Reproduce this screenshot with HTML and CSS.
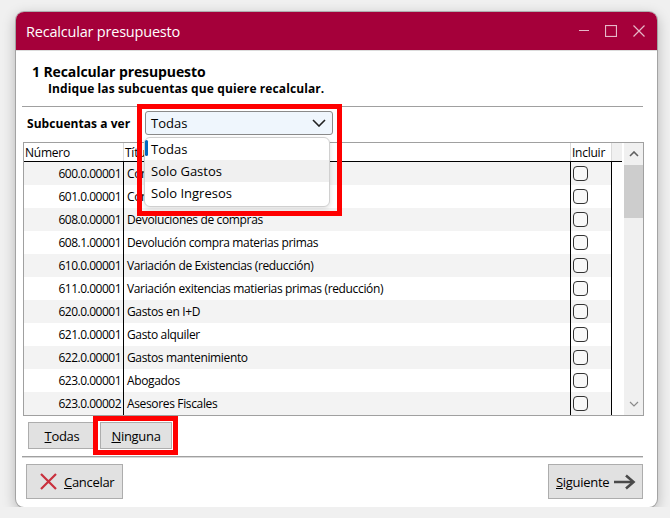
FILE: index.html
```html
<!DOCTYPE html>
<html>
<head>
  <meta charset="utf-8"/>
  <title>Recalcular presupuesto</title>
  <link rel="stylesheet" href="styles.css">
</head>
<body>

<div class="window">
  <div class="titlebar">
    <span class="title">Recalcular presupuesto</span>
    <div class="win-btns">
      <svg class="wb-min" width="12" height="12" viewBox="0 0 12 12"><path d="M0 5.5 H10" /></svg>
      <svg class="wb-max" width="12" height="12" viewBox="0 0 12 12"><rect x="0.5" y="0.5" width="11" height="11" /></svg>
      <svg class="wb-close" width="12" height="12" viewBox="0 0 12 12"><path d="M0.5 0.5 L11.5 11.5 M11.5 0.5 L0.5 11.5" /></svg>
    </div>
  </div>

  <div class="content">
    <div class="step">
      <h1>1 Recalcular presupuesto</h1>
      <p>Indique las subcuentas que quiere recalcular.</p>
    </div>

    <div class="rule"></div>

    <div class="filter">
      <label>Subcuentas a ver</label>
      <div class="combo-wrap">
        <div class="combo">
          <span>Todas</span>
          <svg width="14" height="8" viewBox="0 0 14 8"><path d="M1 1 L7 7 L13 1" /></svg>
        </div>
        <ul class="dropdown">
          <li class="current">Todas</li>
          <li class="hover">Solo Gastos</li>
          <li>Solo Ingresos</li>
        </ul>
        <div class="mark mark-combo"></div>
      </div>
    </div>

    <div class="grid">
      <div class="grid-main">
        <div class="grid-head">
          <div class="c-num">Número</div>
          <div class="c-tit">Título</div>
          <div class="c-inc">Incluir</div>
          <div class="c-fill"></div>
        </div>
        <div class="grid-body">
          <div class="row"><div class="c-num">600.0.00001</div><div class="c-tit">Compras de mercaderías</div><div class="c-inc"><span class="check"></span></div><div class="c-fill"></div></div>
          <div class="row"><div class="c-num">601.0.00001</div><div class="c-tit">Compras de materias primas</div><div class="c-inc"><span class="check"></span></div><div class="c-fill"></div></div>
          <div class="row"><div class="c-num">608.0.00001</div><div class="c-tit">Devoluciones de compras</div><div class="c-inc"><span class="check"></span></div><div class="c-fill"></div></div>
          <div class="row"><div class="c-num">608.1.00001</div><div class="c-tit">Devolución compra materias primas</div><div class="c-inc"><span class="check"></span></div><div class="c-fill"></div></div>
          <div class="row"><div class="c-num">610.0.00001</div><div class="c-tit">Variación de Existencias (reducción)</div><div class="c-inc"><span class="check"></span></div><div class="c-fill"></div></div>
          <div class="row"><div class="c-num">611.0.00001</div><div class="c-tit">Variación exitencias matierias primas (reducción)</div><div class="c-inc"><span class="check"></span></div><div class="c-fill"></div></div>
          <div class="row"><div class="c-num">620.0.00001</div><div class="c-tit">Gastos en I+D</div><div class="c-inc"><span class="check"></span></div><div class="c-fill"></div></div>
          <div class="row"><div class="c-num">621.0.00001</div><div class="c-tit">Gasto alquiler</div><div class="c-inc"><span class="check"></span></div><div class="c-fill"></div></div>
          <div class="row"><div class="c-num">622.0.00001</div><div class="c-tit">Gastos mantenimiento</div><div class="c-inc"><span class="check"></span></div><div class="c-fill"></div></div>
          <div class="row"><div class="c-num">623.0.00001</div><div class="c-tit">Abogados</div><div class="c-inc"><span class="check"></span></div><div class="c-fill"></div></div>
          <div class="row"><div class="c-num">623.0.00002</div><div class="c-tit">Asesores Fiscales</div><div class="c-inc"><span class="check"></span></div><div class="c-fill"></div></div>
        </div>
      </div>
      <div class="vscroll">
        <div class="sb-arrow">
          <svg width="10" height="6" viewBox="0 0 10 6"><path d="M1 5 L5 1 L9 5" /></svg>
        </div>
        <div class="sb-thumb"></div>
        <div class="sb-track"></div>
        <div class="sb-arrow sb-down">
          <svg width="10" height="6" viewBox="0 0 10 6"><path d="M1 1 L5 5 L9 1" /></svg>
        </div>
      </div>
    </div>

    <div class="sel-btns">
      <button class="btn btn-todas"><u>T</u>odas</button>
      <div class="mark-wrap">
        <button class="btn btn-ninguna"><u>N</u>inguna</button>
        <div class="mark mark-ninguna"></div>
      </div>
    </div>

    <div class="sep"></div>

    <div class="footer">
      <button class="btn btn-big btn-cancel">
        <svg width="17" height="17" viewBox="0 0 17 17"><path d="M1 1 L16 16 M16 1 L1 16" /></svg>
        <span><u>C</u>ancelar</span>
      </button>
      <button class="btn btn-big btn-next">
        <span><u>S</u>iguiente</span>
        <svg width="23" height="16" viewBox="0 0 23 16"><path class="shaft" d="M1 8 H20" /><path d="M13 1.5 L20.5 8 L13 14.5" /></svg>
      </button>
    </div>
  </div>
</div>

</body>
</html>
```

FILE: styles.css
```css
body {
    margin: 0px;
    padding: 0px;
    background-color: #f0f0f0;
    font-family: "Open Sans", "Noto Sans", sans-serif;
    color: #000;
}

.window {
    width: 641px;
    height: 495px;
    margin: 12px 0px 0px 16px;
    background-color: #fff;
    border-radius: 8px;
    overflow: hidden;
    box-shadow: 0 0 0 1px rgba(0,0,0,0.22), 0 4px 14px rgba(0,0,0,0.28);
    display: flex;
    flex-direction: column;
}

/* title bar */
.titlebar {
    height: 38px;
    flex: none;
    background-color: #a5003a;
    border-bottom: 1px solid #dcdcdc;
    display: flex;
    align-items: center;
    justify-content: space-between;
    padding-left: 10px;
}
.title {
    color: #fff;
    font-size: 14.5px;
    letter-spacing: -0.2px;
}
.win-btns {
    display: flex;
    align-items: center;
    margin-right: 12px;
    margin-top: -1px;
}
.win-btns svg {
    fill: none;
    stroke: rgba(255,255,255,0.72);
    stroke-width: 1.2;
}
.wb-max { margin-left: 14px; }
.wb-close { margin-left: 16px; }

/* content */
.content {
    flex: 1;
    display: flex;
    flex-direction: column;
}
.step {
    margin-top: 12px;
}
.step h1 {
    margin: 0px 0px 0px 16px;
    font-size: 14px;
    line-height: 18px;
    font-weight: bold;
    letter-spacing: -0.1px;
}
.step p {
    margin: 0px 0px 0px 32px;
    font-size: 12px;
    line-height: 16px;
    font-weight: bold;
    letter-spacing: 0.1px;
}
.rule {
    height: 1px;
    margin: 9px 14px 0px 6px;
    background-color: #a0a0a0;
}

/* filter */
.filter {
    margin-top: 4px;
    display: flex;
    align-items: center;
    padding-left: 11px;
}
.filter label {
    width: 118px;
    font-size: 12px;
    font-weight: bold;
    letter-spacing: 0.05px;
}
.combo-wrap {
    position: relative;
    z-index: 2;
}
.combo {
    width: 188px;
    height: 24px;
    box-sizing: border-box;
    border: 1px solid #8a8a8a;
    border-radius: 3px;
    background-color: #eff6fd;
    display: flex;
    align-items: center;
    justify-content: space-between;
    padding: 0px 6px 0px 5px;
    font-size: 13px;
}
.combo svg {
    fill: none;
    stroke: #222;
    stroke-width: 1.6;
}
.dropdown {
    position: absolute;
    left: -1px;
    top: 26px;
    width: 186px;
    height: 70px;
    box-sizing: border-box;
    margin: 0px;
    padding: 0px;
    list-style: none;
    background-color: #fff;
    border: 1px solid #d0d0d0;
    border-radius: 6px;
    box-shadow: 0 2px 5px rgba(0,0,0,0.12);
    font-size: 13px;
}
.dropdown li {
    height: 22px;
    line-height: 22px;
    padding-left: 6px;
    position: relative;
}
.dropdown li.hover {
    background-color: #f0f0f0;
}
.dropdown li.current::before {
    content: "";
    position: absolute;
    left: 0px;
    top: 2px;
    width: 3px;
    height: 16px;
    border-radius: 2px;
    background-color: #0067c0;
}

.mark {
    position: absolute;
    box-sizing: border-box;
    border: 5px solid #f00;
}
.mark-combo {
    left: -8px;
    top: -7px;
    width: 205px;
    height: 112px;
}

/* grid */
.grid {
    margin: 7px 0px 0px 7px;
    width: 621px;
    height: 274px;
    box-sizing: border-box;
    border: 1px solid #a0a0a0;
    display: flex;
    overflow: hidden;
    font-size: 12px;
    letter-spacing: -0.25px;
}
.grid-main {
    width: 598px;
    flex: none;
}
.grid-head {
    display: flex;
    height: 18px;
    border-bottom: 1px solid #000;
    line-height: 20px;
}
.grid-head > div {
    box-sizing: border-box;
    border-right: 1px solid #dadada;
    padding-left: 1px;
    white-space: nowrap;
    overflow: hidden;
}
.grid-head .c-fill {
    background-color: #f0f0f0;
    border-right: 0px;
}
.c-num { width: 100px; }
.c-tit { width: 447px; }
.c-inc { width: 41px; }
.c-fill { width: 10px; }

.row {
    display: flex;
    height: 23px;
    line-height: 23px;
}
.row:nth-child(odd) .c-num,
.row:nth-child(odd) .c-tit,
.row:nth-child(odd) .c-inc {
    background-color: #f3f3f3;
}
.row > div {
    box-sizing: border-box;
    white-space: nowrap;
    overflow: hidden;
}
.row .c-num {
    text-align: right;
    padding-right: 2px;
    letter-spacing: -0.5px;
    border-right: 1px solid #000;
}
.row .c-tit {
    padding-left: 3px;
    letter-spacing: -0.35px;
}
.row .c-inc {
    border-left: 1px solid #000;
    border-right: 1px solid #000;
    width: 42px;
    margin-left: -1px;
    display: flex;
    align-items: center;
    padding-left: 2px;
}
.check {
    width: 15px;
    height: 15px;
    box-sizing: border-box;
    border: 1px solid #333;
    border-radius: 4px;
    background-color: #f8f8f8;
}

.vscroll {
    width: 20px;
    flex: none;
    margin-left: 2px;
    background-color: #f0f0f0;
    display: flex;
    flex-direction: column;
}
.sb-arrow {
    height: 22px;
    display: flex;
    align-items: center;
    justify-content: center;
}
.sb-arrow svg {
    fill: none;
    stroke: #606060;
    stroke-width: 1.6;
}
.sb-down svg {
    stroke: #8a8a8a;
    stroke-width: 1.2;
}
.sb-thumb {
    height: 53px;
    background-color: #cdcdcd;
}
.sb-track {
    flex: 1;
}

/* buttons */
.btn {
    font-family: "Open Sans", "Noto Sans", sans-serif;
    font-size: 13px;
    letter-spacing: -0.3px;
    color: #000;
    background-color: #e1e1e1;
    border: 1px solid #adadad;
    border-radius: 0px;
    padding: 0px;
    margin: 0px;
    cursor: pointer;
}
.sel-btns {
    margin-top: 6px;
    padding-left: 12px;
    display: flex;
}
.sel-btns .btn {
    height: 27px;
}
.btn-todas { width: 68px; }
.mark-wrap {
    position: relative;
    margin-left: 4px;
}
.btn-ninguna { width: 72px; }
.mark-ninguna {
    left: -7px;
    top: -6px;
    width: 85px;
    height: 39px;
}

.sep {
    margin: 7px 0px 0px 6px;
    width: 621px;
    height: 1px;
    background-color: #a0a0a0;
    border-bottom: 1px solid #d8d8d8;
}

.footer {
    margin-top: 6px;
    padding: 0px 14px 0px 10px;
    display: flex;
    justify-content: space-between;
}
.btn-big {
    height: 35px;
    display: flex;
    align-items: center;
}
.btn-cancel {
    width: 97px;
    padding-left: 13px;
}
.btn-cancel svg {
    fill: none;
    stroke: #c9303d;
    stroke-width: 2.2;
    margin-right: 7px;
}
.btn-next {
    width: 95px;
    padding-left: 7px;
}
.btn-next svg {
    fill: none;
    stroke: #4a4a4a;
    stroke-width: 2.6;
    margin-left: 4px;
}
```
